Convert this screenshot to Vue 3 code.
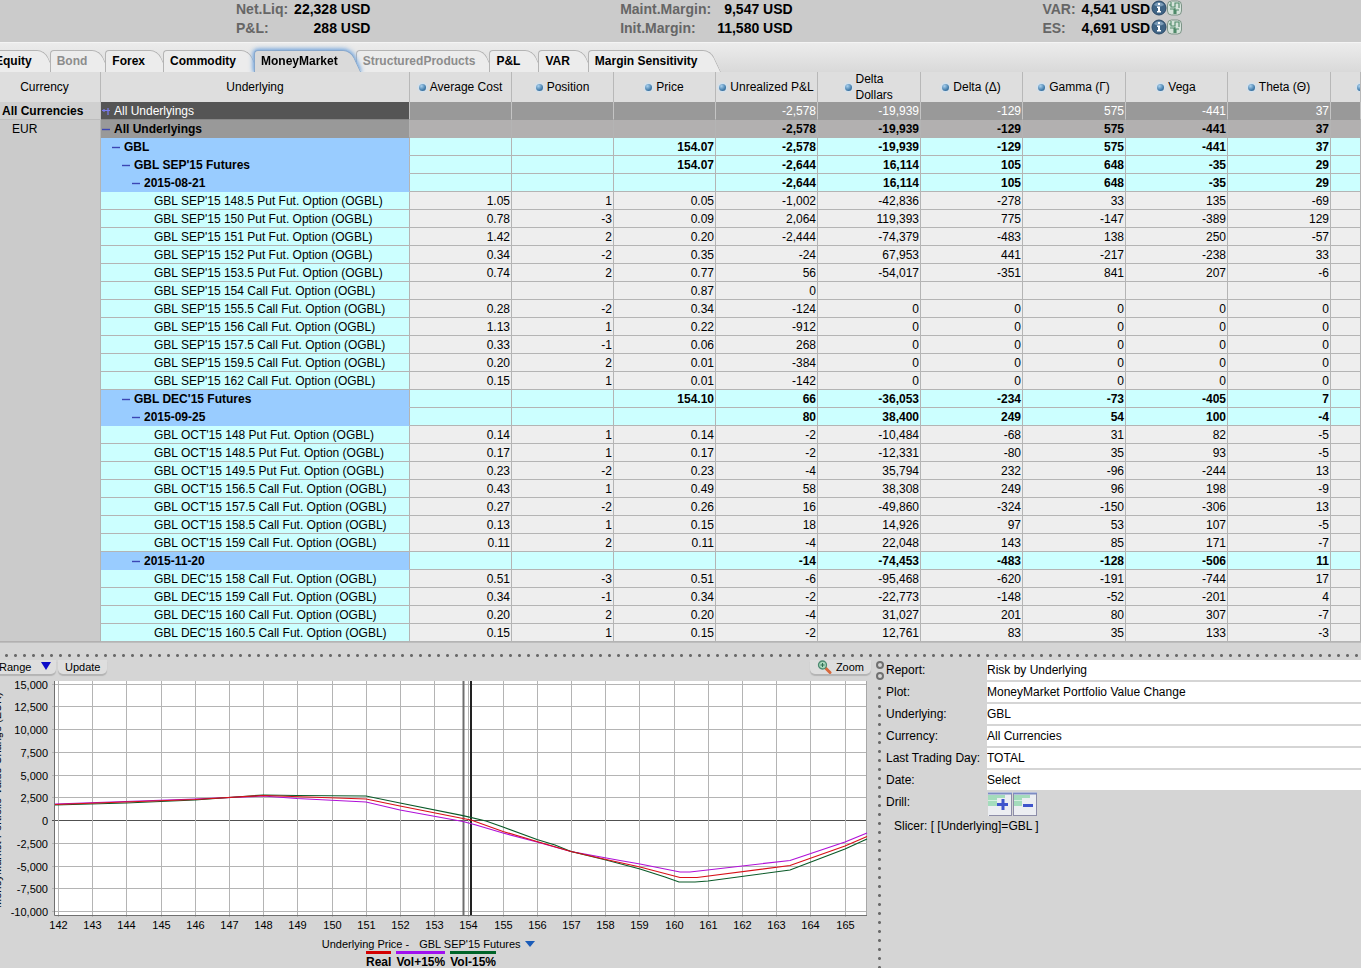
<script setup>
import { ref } from 'vue'

const stats = [
  [
    { label: 'Net.Liq:', value: '22,328 USD' },
    { label: 'P&L:', value: '288 USD' }
  ],
  [
    { label: 'Maint.Margin:', value: '9,547 USD' },
    { label: 'Init.Margin:', value: '11,580 USD' }
  ],
  [
    { label: 'VAR:', value: '4,541 USD', icons: true },
    { label: 'ES:', value: '4,691 USD', icons: true }
  ]
]

const tabs = [
  { name: 'Equity' },
  { name: 'Bond', disabled: true },
  { name: 'Forex' },
  { name: 'Commodity' },
  { name: 'MoneyMarket' },
  { name: 'StructuredProducts', disabled: true },
  { name: 'P&L' },
  { name: 'VAR' },
  { name: 'Margin Sensitivity' }
]
const activeTab = ref('MoneyMarket')

const columns = [
  { name: 'Average Cost' },
  { name: 'Position' },
  { name: 'Price' },
  { name: 'Unrealized P&L' },
  { name: 'Delta Dollars', wide: true },
  { name: 'Delta (Δ)' },
  { name: 'Gamma (Γ)', wide: true },
  { name: 'Vega' },
  { name: 'Theta (Θ)', wide: true }
]

// type, level, name, then one value for each column
const rows = [
  ['total', 0, 'All Underlyings', '', '', '', '-2,578', '-19,939', '-129', '575', '-441', '37'],
  ['subtotal', 0, 'All Underlyings', '', '', '', '-2,578', '-19,939', '-129', '575', '-441', '37'],
  ['group', 1, 'GBL', '', '', '154.07', '-2,578', '-19,939', '-129', '575', '-441', '37'],
  ['group', 2, "GBL SEP'15 Futures", '', '', '154.07', '-2,644', '16,114', '105', '648', '-35', '29'],
  ['group', 3, '2015-08-21', '', '', '', '-2,644', '16,114', '105', '648', '-35', '29'],
  ['option', 4, "GBL SEP'15 148.5 Put Fut. Option (OGBL)", '1.05', '1', '0.05', '-1,002', '-42,836', '-278', '33', '135', '-69'],
  ['option', 4, "GBL SEP'15 150 Put Fut. Option (OGBL)", '0.78', '-3', '0.09', '2,064', '119,393', '775', '-147', '-389', '129'],
  ['option', 4, "GBL SEP'15 151 Put Fut. Option (OGBL)", '1.42', '2', '0.20', '-2,444', '-74,379', '-483', '138', '250', '-57'],
  ['option', 4, "GBL SEP'15 152 Put Fut. Option (OGBL)", '0.34', '-2', '0.35', '-24', '67,953', '441', '-217', '-238', '33'],
  ['option', 4, "GBL SEP'15 153.5 Put Fut. Option (OGBL)", '0.74', '2', '0.77', '56', '-54,017', '-351', '841', '207', '-6'],
  ['option', 4, "GBL SEP'15 154 Call Fut. Option (OGBL)", '', '', '0.87', '0', '', '', '', '', ''],
  ['option', 4, "GBL SEP'15 155.5 Call Fut. Option (OGBL)", '0.28', '-2', '0.34', '-124', '0', '0', '0', '0', '0'],
  ['option', 4, "GBL SEP'15 156 Call Fut. Option (OGBL)", '1.13', '1', '0.22', '-912', '0', '0', '0', '0', '0'],
  ['option', 4, "GBL SEP'15 157.5 Call Fut. Option (OGBL)", '0.33', '-1', '0.06', '268', '0', '0', '0', '0', '0'],
  ['option', 4, "GBL SEP'15 159.5 Call Fut. Option (OGBL)", '0.20', '2', '0.01', '-384', '0', '0', '0', '0', '0'],
  ['option', 4, "GBL SEP'15 162 Call Fut. Option (OGBL)", '0.15', '1', '0.01', '-142', '0', '0', '0', '0', '0'],
  ['group', 2, "GBL DEC'15 Futures", '', '', '154.10', '66', '-36,053', '-234', '-73', '-405', '7'],
  ['group', 3, '2015-09-25', '', '', '', '80', '38,400', '249', '54', '100', '-4'],
  ['option', 4, "GBL OCT'15 148 Put Fut. Option (OGBL)", '0.14', '1', '0.14', '-2', '-10,484', '-68', '31', '82', '-5'],
  ['option', 4, "GBL OCT'15 148.5 Put Fut. Option (OGBL)", '0.17', '1', '0.17', '-2', '-12,331', '-80', '35', '93', '-5'],
  ['option', 4, "GBL OCT'15 149.5 Put Fut. Option (OGBL)", '0.23', '-2', '0.23', '-4', '35,794', '232', '-96', '-244', '13'],
  ['option', 4, "GBL OCT'15 156.5 Call Fut. Option (OGBL)", '0.43', '1', '0.49', '58', '38,308', '249', '96', '198', '-9'],
  ['option', 4, "GBL OCT'15 157.5 Call Fut. Option (OGBL)", '0.27', '-2', '0.26', '16', '-49,860', '-324', '-150', '-306', '13'],
  ['option', 4, "GBL OCT'15 158.5 Call Fut. Option (OGBL)", '0.13', '1', '0.15', '18', '14,926', '97', '53', '107', '-5'],
  ['option', 4, "GBL OCT'15 159 Call Fut. Option (OGBL)", '0.11', '2', '0.11', '-4', '22,048', '143', '85', '171', '-7'],
  ['group', 3, '2015-11-20', '', '', '', '-14', '-74,453', '-483', '-128', '-506', '11'],
  ['option', 4, "GBL DEC'15 158 Call Fut. Option (OGBL)", '0.51', '-3', '0.51', '-6', '-95,468', '-620', '-191', '-744', '17'],
  ['option', 4, "GBL DEC'15 159 Call Fut. Option (OGBL)", '0.34', '-1', '0.34', '-2', '-22,773', '-148', '-52', '-201', '4'],
  ['option', 4, "GBL DEC'15 160 Call Fut. Option (OGBL)", '0.20', '2', '0.20', '-4', '31,027', '201', '80', '307', '-7'],
  ['option', 4, "GBL DEC'15 160.5 Call Fut. Option (OGBL)", '0.15', '1', '0.15', '-2', '12,761', '83', '35', '133', '-3']
].map(([type, level, name, ...values]) => ({ type, level, name, values }))

const fields = [
  { id: 'report', label: 'Report:', value: 'Risk by Underlying' },
  { id: 'plot', label: 'Plot:', value: 'MoneyMarket Portfolio Value Change' },
  { id: 'underlying', label: 'Underlying:', value: 'GBL' },
  { id: 'currency', label: 'Currency:', value: 'All Currencies' },
  { id: 'lastday', label: 'Last Trading Day:', value: 'TOTAL' },
  { id: 'date', label: 'Date:', value: 'Select' }
]

// Axis ticks of the chart
const yTicks = []
for (let v = 15000; v >= -10000; v -= 2500) {
  yTicks.push({ label: v.toLocaleString('en-US'), y: Math.round(144 - v / 2500 * 22.75) + 0.5, zero: v === 0 })
}
const xTicks = []
for (let p = 142; p <= 165; p++) {
  xTicks.push({ label: p, x: Math.round(58 + (p - 142) * 34.2) + 0.5 })
}

const series = [
  { name: 'Vol+15%', color: '#b010d8', points: '55,128 195,123 263,120 297,122.5 366,126 400,134 463,145.5 476,149 503,157 537,166 571,175.5 620,184.5 640,188 680,196 690,196 790,184.5 845,166 867,157' },
  { name: 'Vol-15%', color: '#0a5a28', points: '55,129 126,127 195,124 263,119 297,119.5 366,120 400,127 463,139.6 486,145 503,151 537,163.5 555,169 571,175.5 606,184 640,193 665,201 679,206 695,206 708,205 790,194 845,173 867,163' },
  { name: 'Real', color: '#d81018', points: '55,128.5 195,123.5 263,119.5 366,123 400,130 463,142.5 471,144 503,155.5 537,165.5 571,175.5 606,183.5 640,191 680,201.5 697,201.5 790,189.5 845,170 867,160.5' }
]
const legend = [
  { name: 'Real', cls: 'real' },
  { name: 'Vol+15%', cls: 'volup' },
  { name: 'Vol-15%', cls: 'voldown' }
]
</script>

<template>
  <div class="page">
    <header class="stats">
      <dl v-for="(group, g) in stats" :key="g" class="stat-group">
        <div v-for="s in group" :key="s.label" class="stat">
          <dt>{{ s.label }}</dt>
          <dd>
            {{ s.value }}
            <span v-if="s.icons" class="stat-icons">
              <svg width="16" height="16" viewBox="0 0 16 16">
                <circle cx="8" cy="8" r="7" fill="#3f6485" stroke="#2b4a68" />
                <path d="M3 5a6 6 0 0 1 10 0q-5 3-10 0" fill="#7c9cb8" />
                <path d="M7 3h2v2H7zM6 6.500h3V11h1v1.500H6V11h1V8H6z" fill="#fff" />
              </svg>
              <svg width="15" height="16" viewBox="0 0 15 16">
                <rect x=".5" y="1" width="14" height="14" rx="4" fill="#d5e3da" stroke="#7d9487" />
                <path d="M4 2v5h4V3h4v5M3 9h4v5M9 14v-4h3M2 5h2M8 8v6" fill="none" stroke="#4f8a69" stroke-width="1.100" />
              </svg>
            </span>
          </dd>
        </div>
      </dl>
    </header>

    <nav class="tabs">
      <button
        v-for="t in tabs"
        :key="t.name"
        class="tab"
        :class="{ active: t.name === activeTab }"
        :disabled="t.disabled"
        @click="activeTab = t.name"
      ><span>{{ t.name }}</span></button>
    </nav>

    <table class="risk">
      <colgroup>
        <col class="c-currency">
        <col class="c-underlying">
        <col v-for="c in columns" :key="c.name" class="c-value" :class="{ wide: c.wide }">
        <col>
      </colgroup>
      <thead>
        <tr>
          <th class="h-currency">Currency</th>
          <th>Underlying</th>
          <th v-for="c in columns" :key="c.name">
            <div class="head">
              <i class="dot"></i>
              <span :class="{ narrow: c.name === 'Delta Dollars' }">{{ c.name }}</span>
            </div>
          </th>
          <th><div class="head last"><i class="dot"></i></div></th>
        </tr>
      </thead>
      <tbody>
        <tr v-for="(r, i) in rows" :key="i" :class="r.type">
          <td v-if="i === 0" class="cur cur-all">All Currencies</td>
          <td v-if="i === 1" class="cur cur-eur" :rowspan="rows.length - 1">EUR</td>
          <td class="name">
            <div class="name-box" :style="{ paddingLeft: r.level * 10 + 'px' }">
              <button v-if="r.type !== 'option'" class="toggle" :aria-label="r.name">
                <svg width="9" height="9" viewBox="0 0 9 9">
                  <path v-if="r.type === 'total'" d="M1 3.500h4M3 2v3M7 1v2M7 4v4M5 3.500h4" fill="none" stroke="#7a7cf0" stroke-width="1.200" />
                  <path v-else d="M1 4.500h8" stroke="#3c46b4" stroke-width="1.400" />
                </svg>
              </button>
              <i v-else class="toggle"></i>
              <span>{{ r.name }}</span>
            </div>
          </td>
          <td v-for="(v, k) in r.values" :key="k" class="num">{{ v }}</td>
          <td></td>
        </tr>
      </tbody>
    </table>

    <div class="hsplit"></div>

    <main class="bottom">
      <section class="plot">
        <div class="toolbar">
          <label class="range">
            <select aria-label="Range" class="pill"><option>Range</option></select>
            <svg class="arrow" width="10" height="8" viewBox="0 0 10 8"><path d="M0 0h10L5 8z" fill="#0a0ac8" /></svg>
          </label>
          <button class="pill">Update</button>
          <button class="pill zoom">
            <svg width="15" height="14" viewBox="0 0 15 14">
              <path d="M8 7.500l5 5" stroke="#d8683c" stroke-width="3" stroke-linecap="round" />
              <circle cx="5.500" cy="5" r="4" fill="#a8d8bc" stroke="#4c8a70" stroke-width="1.300" />
              <path d="M3.500 5h4M5.500 3v4" stroke="#2f6e54" />
            </svg>
            Zoom
          </button>
        </div>

        <svg class="chart" viewBox="0 0 875 260">
          <rect x="55" y="5" width="812" height="234" fill="#fff" />
          <g stroke="#b4b4b4">
            <line v-for="t in yTicks" :key="t.label" x1="52" x2="867" :y1="t.y" :y2="t.y" :class="{ zero: t.zero }" />
            <line v-for="t in xTicks" :key="t.label" :x1="t.x" :x2="t.x" y1="5" y2="241" />
          </g>
          <path d="M54.500 5v234.500H867" fill="none" stroke="#707070" />
          <path d="M866.500 5v234" stroke="#a8a8a8" />
          <path d="M463.500 5v234" stroke="#6e6e6e" stroke-width="2" />
          <path d="M471 5v234" stroke="#222" stroke-width="2" />
          <polyline v-for="s in series" :key="s.name" :points="s.points" fill="none" :stroke="s.color" stroke-width="1.200" />
          <g class="ticks" text-anchor="end">
            <text v-for="t in yTicks" :key="t.label" x="48" :y="t.y + 4">{{ t.label }}</text>
          </g>
          <g class="ticks" text-anchor="middle">
            <text v-for="t in xTicks" :key="t.label" :x="t.x" y="253">{{ t.label }}</text>
          </g>
          <text class="ticks" transform="translate(1 232) rotate(-90)">MoneyMarket Portfolio Value Change (EUR)</text>
        </svg>

        <div class="axis">
          <label for="axis">Underlying Price -</label>
          <select id="axis"><option>GBL SEP'15 Futures</option></select>
          <svg width="10" height="6" viewBox="0 0 10 6"><path d="M0 0h10L5 6z" fill="#1a5cb8" /></svg>
        </div>
        <ul class="legend">
          <li v-for="l in legend" :key="l.name" :class="l.cls">{{ l.name }}</li>
        </ul>
      </section>

      <div class="vsplit">
        <i class="ring"></i>
        <i class="ring"></i>
        <div class="vdots"></div>
      </div>

      <section class="settings">
        <div v-for="f in fields" :key="f.id" class="field">
          <label :for="f.id">{{ f.label }}</label>
          <select :id="f.id"><option>{{ f.value }}</option></select>
        </div>
        <div class="field drill">
          <span>Drill:</span>
          <button aria-label="Drill down">
            <svg width="24" height="24" viewBox="0 0 24 24">
              <rect width="24" height="24" fill="#eceef2" />
              <path d="M0 1.500h24" stroke="#7d8cc4" stroke-width="2" />
              <path d="M0 3h17v3H9v8H0z" fill="#a4dcbc" />
              <path d="M0 8.500h9" stroke="#d5efe0" />
              <path d="M23.500 2v22M1 23.500h23" stroke="#8d8da8" />
              <path d="M15 7v11M9 12.500h11" stroke="#3f55cc" stroke-width="3" />
            </svg>
          </button>
          <button aria-label="Drill up">
            <svg width="24" height="24" viewBox="0 0 24 24">
              <rect width="24" height="24" fill="#eceef2" />
              <path d="M0 1.500h24" stroke="#7d8cc4" stroke-width="2" />
              <path d="M0 3h17v3H9v8H0z" fill="#a4dcbc" />
              <path d="M0 8.500h9" stroke="#d5efe0" />
              <path d="M.5 2v22M23.500 2v22M1 23.500h23" stroke="#8d8da8" fill="none" />
              <path d="M10 13.500h10" stroke="#3f55cc" stroke-width="3" />
            </svg>
          </button>
        </div>
        <p class="slicer">Slicer: [ [Underlying]=GBL ]</p>
      </section>
    </main>
  </div>
</template>

<style>
body {
  margin: 0;
  background: #d5d5d5;
}
</style>

<style scoped>
.page {
  height: 100vh;
  overflow: hidden;
  font: 12px/16px "Liberation Sans", Arial, sans-serif;
  color: #000;
  background: #d5d5d5;
}

button, select {
  font: inherit;
  color: inherit;
  border: 0;
  margin: 0;
  padding: 0;
  background: none;
  appearance: none;
  border-radius: 0;
}

/* Account figures */
.stats {
  display: flex;
  justify-content: space-between;
  align-items: flex-start;
  box-sizing: border-box;
  height: 42px;
  padding: 0 179px 0 236px;
  background: #cbcbcb;
  font-size: 14px;
  line-height: 19px;
  font-weight: bold;
}
.stat-group {
  display: table;
  margin: 0;
}
.stat {
  display: table-row;
}
.stat dt {
  display: table-cell;
  color: #666;
  padding-right: 6px;
}
.stat dd {
  display: table-cell;
  text-align: right;
  white-space: nowrap;
}
.stat-icons {
  display: inline-flex;
  vertical-align: top;
  margin-left: -3px;
}

/* Tabs */
.tabs {
  display: flex;
  align-items: flex-end;
  box-sizing: border-box;
  height: 30px;
  margin-left: -12px;
  border-top: 1px solid #f4f4f4;
  background: linear-gradient(#ececec, #d9d9d9);
}
.tab {
  position: relative;
  height: 22px;
  padding: 0 18px 0 7px;
  font-weight: bold;
  white-space: nowrap;
}
.tab span {
  position: relative;
  z-index: 2;
}
.tab::before,
.tab::after {
  content: "";
  position: absolute;
  box-sizing: border-box;
  top: 0;
  bottom: 0;
  background: #ececec;
  border: 1px solid #b4b4b4;
  border-bottom: 0;
}
.tab::before {
  left: 0;
  right: 20px;
  border-right: 0;
  border-radius: 4px 0 0 0;
}
.tab::after {
  right: 0;
  width: 26px;
  border-left: 0;
  border-radius: 0 8px 0 0;
  transform: skewX(25deg);
}
.tab:disabled {
  color: #8c8c8c;
}
.tab.active {
  z-index: 1;
  filter: drop-shadow(0 0 2px #6fa0d8) drop-shadow(0 0 2px #8db8e6);
  clip-path: inset(-8px -12px 0 -8px);
}
.tab.active::before,
.tab.active::after {
  background: #dadada;
  border-color: #88a8cc;
}
.tab.active + .tab {
  padding-right: 14px;
}

/* Risk table */
.risk {
  width: 100%;
  table-layout: fixed;
  border-collapse: separate;
  border-spacing: 0;
  border-bottom: 1px solid #bdbdbd;
}
.c-currency {
  width: 101px;
}
.c-underlying {
  width: 309px;
}
.c-value {
  width: 102px;
}
.c-value.wide {
  width: 103px;
}
.risk th {
  height: 30px;
  padding: 0;
  box-sizing: border-box;
  font-weight: normal;
  background: #dedede;
  border-right: 1px solid #b8b8b8;
}
.risk th.h-currency {
  padding-right: 11px;
}
.head {
  display: flex;
  align-items: center;
  justify-content: center;
  gap: 4px;
  height: 30px;
  overflow: hidden;
  text-align: left;
  white-space: nowrap;
}
.head.last {
  justify-content: flex-start;
  padding-left: 26px;
}
.head .narrow {
  width: 38px;
  white-space: normal;
}
.dot {
  flex: none;
  width: 7px;
  height: 7px;
  border-radius: 50%;
  background: radial-gradient(circle at 35% 30%, #a8d0ee, #3f79a8 65%, #2f5f8a);
  box-shadow: 0 0 2px 1px #cde3f5;
}
.risk td {
  height: 18px;
  padding: 2px 1px 0 0;
  box-sizing: border-box;
  line-height: 15px;
  background: #eee;
  border-right: 1px solid #b4b4b4;
  border-bottom: 1px solid #b4b4b4;
  white-space: nowrap;
}
.num {
  text-align: right;
}
.name-box {
  display: flex;
  align-items: center;
}
.toggle {
  flex: none;
  display: flex;
  width: 13px;
  height: 9px;
}
.risk .cur {
  background: #cbcbcb;
  vertical-align: top;
}
.risk .cur-all {
  padding-left: 2px;
  font-weight: bold;
  background: #d0d0d0;
}
.risk .cur-eur {
  padding-left: 12px;
  font-weight: normal;
}
.option .name {
  background: #cff;
}
.group td {
  background: #cff;
  font-weight: bold;
}
.group .name {
  background: #9cf;
  border-bottom-color: #9cf;
}
.total td {
  color: #fff;
  background: #999;
  border-right-color: #c4c4c4;
  border-bottom-color: #999;
}
.total .name {
  background: #555;
  border-bottom-color: #888;
}
.total .cur {
  color: #000;
  border-bottom-color: #bdbdbd;
}
.subtotal td {
  font-weight: bold;
  background: #b2b0b0;
  border-bottom-color: #b2b0b0;
}
.subtotal .name {
  background: #999;
  border-bottom-color: #999;
}

/* Split bars */
.hsplit {
  height: 17px;
  background: radial-gradient(circle, #6a6a6a 1px, transparent 2px) 2px 8px / 9px 9px repeat-x;
}
.vsplit {
  display: flex;
  flex-direction: column;
  align-items: center;
  gap: 3px;
  padding-top: 1px;
}
.ring {
  box-sizing: border-box;
  width: 8px;
  height: 8px;
  border: 2px solid #707070;
  border-radius: 50%;
}
.vdots {
  flex: 1;
  width: 9px;
  margin-top: 1px;
  background: radial-gradient(circle, #6a6a6a 1px, transparent 2px) 0 0 / 9px 9px repeat-y;
}

/* Plot */
.bottom {
  display: grid;
  grid-template-columns: minmax(0, 1fr) 9px 477px;
}
.plot {
  font-size: 11px;
}
.toolbar {
  display: flex;
  gap: 2px;
  height: 16px;
  padding-right: 4px;
}
.pill {
  height: 14px;
  padding: 0 7px;
  line-height: 14px;
  border-radius: 0 0 5px 5px;
  background: #dedede;
  box-shadow: 0 2px 1px #b4b4b4;
}
.range {
  position: relative;
  display: flex;
  margin-left: -8px;
}
.range .pill {
  width: 64px;
}
.arrow {
  position: absolute;
  right: 5px;
  top: 2px;
  pointer-events: none;
}
.zoom {
  display: flex;
  align-items: center;
  gap: 4px;
  margin-left: auto;
}
.chart {
  display: block;
  width: 100%;
}
.zero {
  stroke: #505050;
}
.ticks {
  font-size: 11px;
}
.axis {
  display: flex;
  align-items: center;
  justify-content: center;
  gap: 4px;
  height: 15px;
  padding-right: 18px;
}
.axis label {
  padding-right: 6px;
}
.legend {
  display: flex;
  justify-content: center;
  gap: 5px;
  margin: 0;
  padding: 0 13px 0 0;
  list-style: none;
  font-size: 12px;
  line-height: 16px;
  font-weight: bold;
}
.legend li {
  border-top: 3px solid;
}
.legend .real {
  border-top-color: #d40000;
}
.legend .volup {
  border-top-color: #a010f0;
}
.legend .voldown {
  border-top-color: #006428;
}

/* Plot settings */
.settings {
  padding-left: 2px;
}
.field {
  display: grid;
  grid-template-columns: 101px minmax(0, 1fr);
  align-items: center;
  height: 20px;
  margin-bottom: 2px;
}
.field select {
  height: 20px;
  background: #fff;
}
.drill {
  grid-template-columns: 101px 24px 24px;
  align-items: start;
  column-gap: 1px;
  height: 24px;
  line-height: 20px;
}
.drill button {
  display: flex;
}
.slicer {
  margin: 2px 0 0 8px;
}
</style>
